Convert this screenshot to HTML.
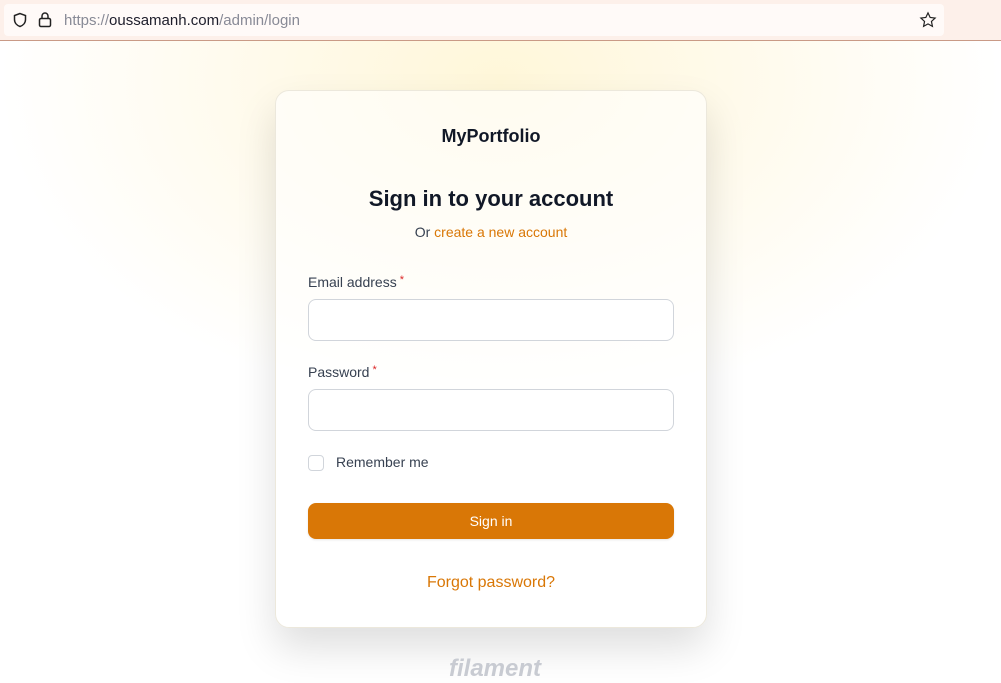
<!DOCTYPE html>
<html><head><style>
*{box-sizing:border-box;margin:0;padding:0}
body{width:1001px;height:675px;overflow:hidden;font-family:"Liberation Sans",sans-serif;background:#fff;position:relative}
.bar{position:absolute;left:0;top:0;width:1001px;height:41px;background:#fdf0ea;border-bottom:1px solid #c99a86}
.url{position:absolute;left:4px;top:4px;width:940px;height:32px;background:#fffaf8;border-radius:4px}
.url span.t{position:absolute;left:60px;top:8px;font-size:15px;color:#888a96}
.url b{font-weight:normal;color:#1d1d2b}
.glow{position:absolute;left:0;top:41px;width:1001px;height:634px;background:radial-gradient(ellipse 500px 330px at 500px 40px,#fff7d9 0%,#fffaea 45%,#fff 100%)}
.card{position:absolute;left:275px;top:90px;width:432px;height:538px;background:rgba(255,255,255,.6);border:1px solid #ece8dc;border-radius:14px;box-shadow:0 20px 40px rgba(0,0,0,.13)}
.c{position:absolute;left:0;width:100%;text-align:center}
label{position:absolute;left:32px;font-size:14px;color:#374151}
label i{color:#dc2626;font-style:normal;font-size:11px;vertical-align:top;margin-left:3px}
.in{position:absolute;left:32px;width:366px;height:42px;background:#fff;border:1px solid #d1d5db;border-radius:8px}
</style></head><body>
<div class="bar"><div class="url">
<svg style="position:absolute;left:8px;top:8px" width="16" height="16" viewBox="0 0 16 16" fill="none" stroke="#222" stroke-width="1.5"><path d="M8 1.5L2.5 3.5v4c0 3.5 2.5 6 5.5 7 3-1 5.5-3.5 5.5-7v-4z"/></svg>
<svg style="position:absolute;left:34px;top:7px" width="14" height="17" viewBox="0 0 14 17" fill="none" stroke="#222" stroke-width="1.5"><rect x="1.5" y="7.5" width="11" height="8" rx="1.5"/><path d="M4 7.5V5a3 3 0 0 1 6 0v2.5"/></svg>
<span class="t">https://<b>oussamanh.com</b>/admin/login</span>
<svg style="position:absolute;left:915px;top:7px" width="18" height="18" viewBox="0 0 24 24" fill="none" stroke="#222" stroke-width="1.6"><path d="M12 2.5l2.9 6.1 6.6.8-4.9 4.5 1.3 6.6L12 17.2l-5.9 3.3 1.3-6.6L2.5 9.4l6.6-.8z"/></svg>
</div></div>
<div class="glow"></div>
<div class="card">
<div class="c" style="top:35px;font-size:18px;font-weight:bold;color:#111827">MyPortfolio</div>
<div class="c" style="top:95px;font-size:22px;font-weight:bold;color:#111827">Sign in to your account</div>
<div class="c" style="top:133px;font-size:14px;color:#374151">Or <span style="color:#d97706">create a new account</span></div>
<label style="top:183px">Email address<i>*</i></label>
<div class="in" style="top:208px"></div>
<label style="top:273px">Password<i>*</i></label>
<div class="in" style="top:298px"></div>
<div style="position:absolute;left:32px;top:364px;width:16px;height:16px;border:1px solid #d1d5db;border-radius:4px;background:#fff"></div>
<label style="left:60px;top:363px">Remember me</label>
<div style="position:absolute;left:32px;top:412px;width:366px;height:36px;background:#d97706;border-radius:8px;color:#fff;font-size:14px;text-align:center;line-height:36px;box-shadow:0 1px 2px rgba(0,0,0,.1)">Sign in</div>
<div class="c" style="top:483px;font-size:16px;color:#d97706">Forgot password?</div>
</div>
<div style="position:absolute;left:0;width:990px;top:655px;text-align:center;font-size:24px;font-weight:bold;font-style:italic;color:#c8cbd2">filament</div>
</body></html>
